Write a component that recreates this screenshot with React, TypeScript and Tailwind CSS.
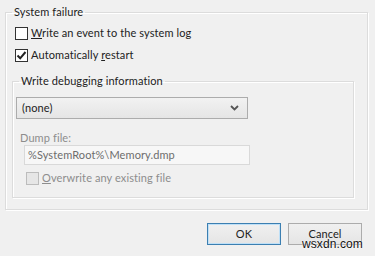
import React from 'react';

const font = "font-['Lato','Liberation_Sans',sans-serif]";

interface CheckRowProps {
  checked?: boolean;
  disabled?: boolean;
  children: React.ReactNode;
}

const CheckRow: React.FC<CheckRowProps> = ({ checked, disabled, children }) => (
  <div className="flex items-center h-[22px]">
    <span
      className={
        'flex items-center justify-center w-[13px] h-[13px] border ' +
        (disabled ? 'border-[#bcbcbc] bg-[#e6e6e6]' : 'border-[#333333] bg-white')
      }
    >
      {checked && (
        <svg width="11" height="11" viewBox="0 0 11 11">
          <path d="M1.5 5.5 L4.2 8.3 L9.5 2" fill="none" stroke="#222" strokeWidth="2" />
        </svg>
      )}
    </span>
    <span className={'ml-[3px] ' + (disabled ? 'text-[#8d8d8d]' : 'text-[#222]')}>{children}</span>
  </div>
);

export default function App() {
  return (
    <div className={`relative w-[375px] h-[256px] bg-[#f0f0f0] text-[11px] tracking-[0.1px] leading-4 ${font} overflow-hidden`}>
      <fieldset className="mt-[4px] ml-[5px] mr-[7px] h-[206px] border border-[#dcdcdc] shadow-[inset_1px_1px_0_#fff,1px_1px_0_#fff]">
        <legend className="ml-[6px] px-[2px] text-[#222]">System failure</legend>
        <div className="pt-[2px] pl-[9px]">
          <CheckRow>
            <span className="underline">W</span>rite an event to the system log
          </CheckRow>
          <CheckRow checked>
            Automatically <span className="underline">r</span>estart
          </CheckRow>
        </div>

        <fieldset className="mt-[7px] ml-[6px] mr-[13px] h-[125px] border border-[#dcdcdc] shadow-[inset_1px_1px_0_#fff,1px_1px_0_#fff]">
          <legend className="ml-[6px] px-[2px] text-[#222]">Write debugging information</legend>

          <div className="mt-[8px] ml-[3px] w-[232px] h-[22px] flex items-center justify-between border border-[#acacac] bg-gradient-to-b from-[#f2f2f2] to-[#e5e5e5] pl-[5px] pr-[8px] text-[#222]">
            <span>(none)</span>
            <svg width="9" height="6" viewBox="0 0 9 6">
              <path d="M1 1 L4.5 4.5 L8 1" fill="none" stroke="#555" strokeWidth="1.8" />
            </svg>
          </div>

          <div className="mt-[12px] ml-[7px] leading-[14px] text-[#8d8d8d]">Dump file:</div>
          <div className="ml-[11px] w-[226px] h-[20px] flex items-center border border-[#d9d9d9] bg-[#f7f7f7] pl-[3px] text-[#6d6d6d]">
            %SystemRoot%\Memory.dmp
          </div>

          <div className="mt-[2px] ml-[13px]">
            <CheckRow disabled>
              <span className="underline">O</span>verwrite any existing file
            </CheckRow>
          </div>
        </fieldset>
      </fieldset>

      <div className="mt-[13px] mr-[13px] flex justify-end gap-[7px]">
        <button className="w-[74px] h-[22px] border border-[#3c7fb1] bg-gradient-to-b from-[#f0f0f0] to-[#e5e5e5] shadow-[inset_0_0_0_1px_#bfe0f7] text-[#222]">
          OK
        </button>
        <button className="w-[74px] h-[22px] border border-[#acacac] bg-gradient-to-b from-[#f0f0f0] to-[#e5e5e5] text-[#222]">
          Cancel
        </button>
      </div>

      <span className="absolute left-[302px] top-[236px] text-[12px] leading-4 font-['Liberation_Sans',sans-serif] text-[#111] [text-shadow:0_0_2px_#fff,0_0_1px_#fff]">
        wsxdn.com
      </span>
    </div>
  );
}
